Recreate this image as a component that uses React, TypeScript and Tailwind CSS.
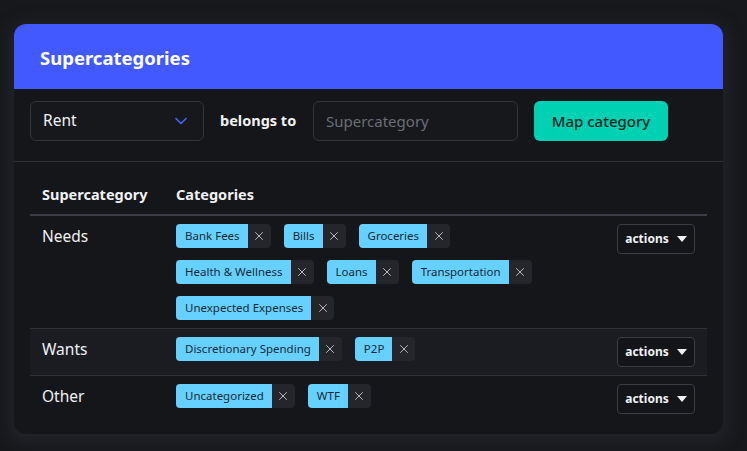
import { ChevronDown, X } from 'lucide-react';

const rows = [
  { name: 'Needs', tags: ['Bank Fees', 'Bills', 'Groceries', 'Health & Wellness', 'Loans', 'Transportation', 'Unexpected Expenses'], striped: false },
  { name: 'Wants', tags: ['Discretionary Spending', 'P2P'], striped: true },
  { name: 'Other', tags: ['Uncategorized', 'WTF'], striped: false },
];

function Tag({ label }: { label: string }) {
  return (
    <div className="flex h-6 items-stretch">
      <span className="flex items-center rounded-l-[4px] bg-[#66d1ff] pl-[9px] pr-[8px] text-[11.5px] text-[#1a2a33]">
        {label}
      </span>
      <button className="flex w-[23px] items-center justify-center rounded-r-[4px] bg-[#24262c] text-[#c8cad0]">
        <X className="h-[14px] w-[14px]" strokeWidth={1.5} />
      </button>
    </div>
  );
}

export default function App() {
  return (
    <div className="min-h-[451px] bg-[#17181c] pl-[14px] pr-[24px] pt-[24px] font-['Noto_Sans',sans-serif] text-[#f0f1f4]">
      <div className="w-[709px] overflow-hidden rounded-[12px] bg-[#15161a] shadow-[0_4px_18px_4px_rgba(60,62,70,0.35)]">
        {/* Header */}
        <div className="flex h-[65px] items-center bg-[#4159ff] px-[26px] pt-[2px]">
          <h1 className="text-[18.5px] font-bold text-white">Supercategories</h1>
        </div>

        {/* Form */}
        <div className="flex items-center border-b border-[#2e3036] px-4 pb-5 pt-3">
          <div className="flex h-10 w-[174px] items-center justify-between rounded-[6px] border border-[#33353b] bg-[#17181c] pl-3 pr-3">
            <span className="text-[15.5px]">Rent</span>
            <ChevronDown className="h-5 w-5 text-[#4a62ff]" strokeWidth={2} />
          </div>
          <span className="ml-4 w-[77px] whitespace-nowrap text-[14.5px] font-bold">belongs to</span>
          <div className="ml-4 flex h-10 w-[205px] items-center rounded-[6px] border border-[#33353b] bg-[#17181c] px-3">
            <span className="text-[15px] text-[#6b6e75]">Supercategory</span>
          </div>
          <button className="ml-4 h-10 w-[134px] rounded-[6px] bg-[#00d1b2] text-[15px] font-medium text-[#13261f]">
            Map category
          </button>
        </div>

        {/* Table */}
        <div className="px-4 pb-3 pt-[20px]">
          <div className="flex h-[34px] items-start border-b-2 border-[#3a3d44] pt-[2px] text-[14.5px] font-bold">
            <div className="w-[146px] pl-3">Supercategory</div>
            <div>Categories</div>
          </div>
          {rows.map((row, i) => (
            <div
              key={row.name}
              className={`flex items-start py-2 ${i < rows.length - 1 ? 'border-b border-[#2e3036]' : ''} ${row.striped ? 'bg-[#1a1c21]' : ''}`}
            >
              <div className="w-[146px] pl-3 text-[15.5px] leading-6">{row.name}</div>
              <div className="flex flex-1 flex-wrap gap-x-[13px] gap-y-3 pr-6">
                {row.tags.map((t) => (
                  <Tag key={t} label={t} />
                ))}
              </div>
              <button className="mr-3 flex h-[30px] w-[78px] shrink-0 items-center justify-center gap-2 rounded-[4px] border border-[#3a3d44] bg-[#141518] text-[12px] font-bold">
                actions
                <svg width="10" height="6" viewBox="0 0 10 6"><path d="M0 0h10L5 6z" fill="#f0f1f4" /></svg>
              </button>
            </div>
          ))}
        </div>
      </div>
    </div>
  );
}
